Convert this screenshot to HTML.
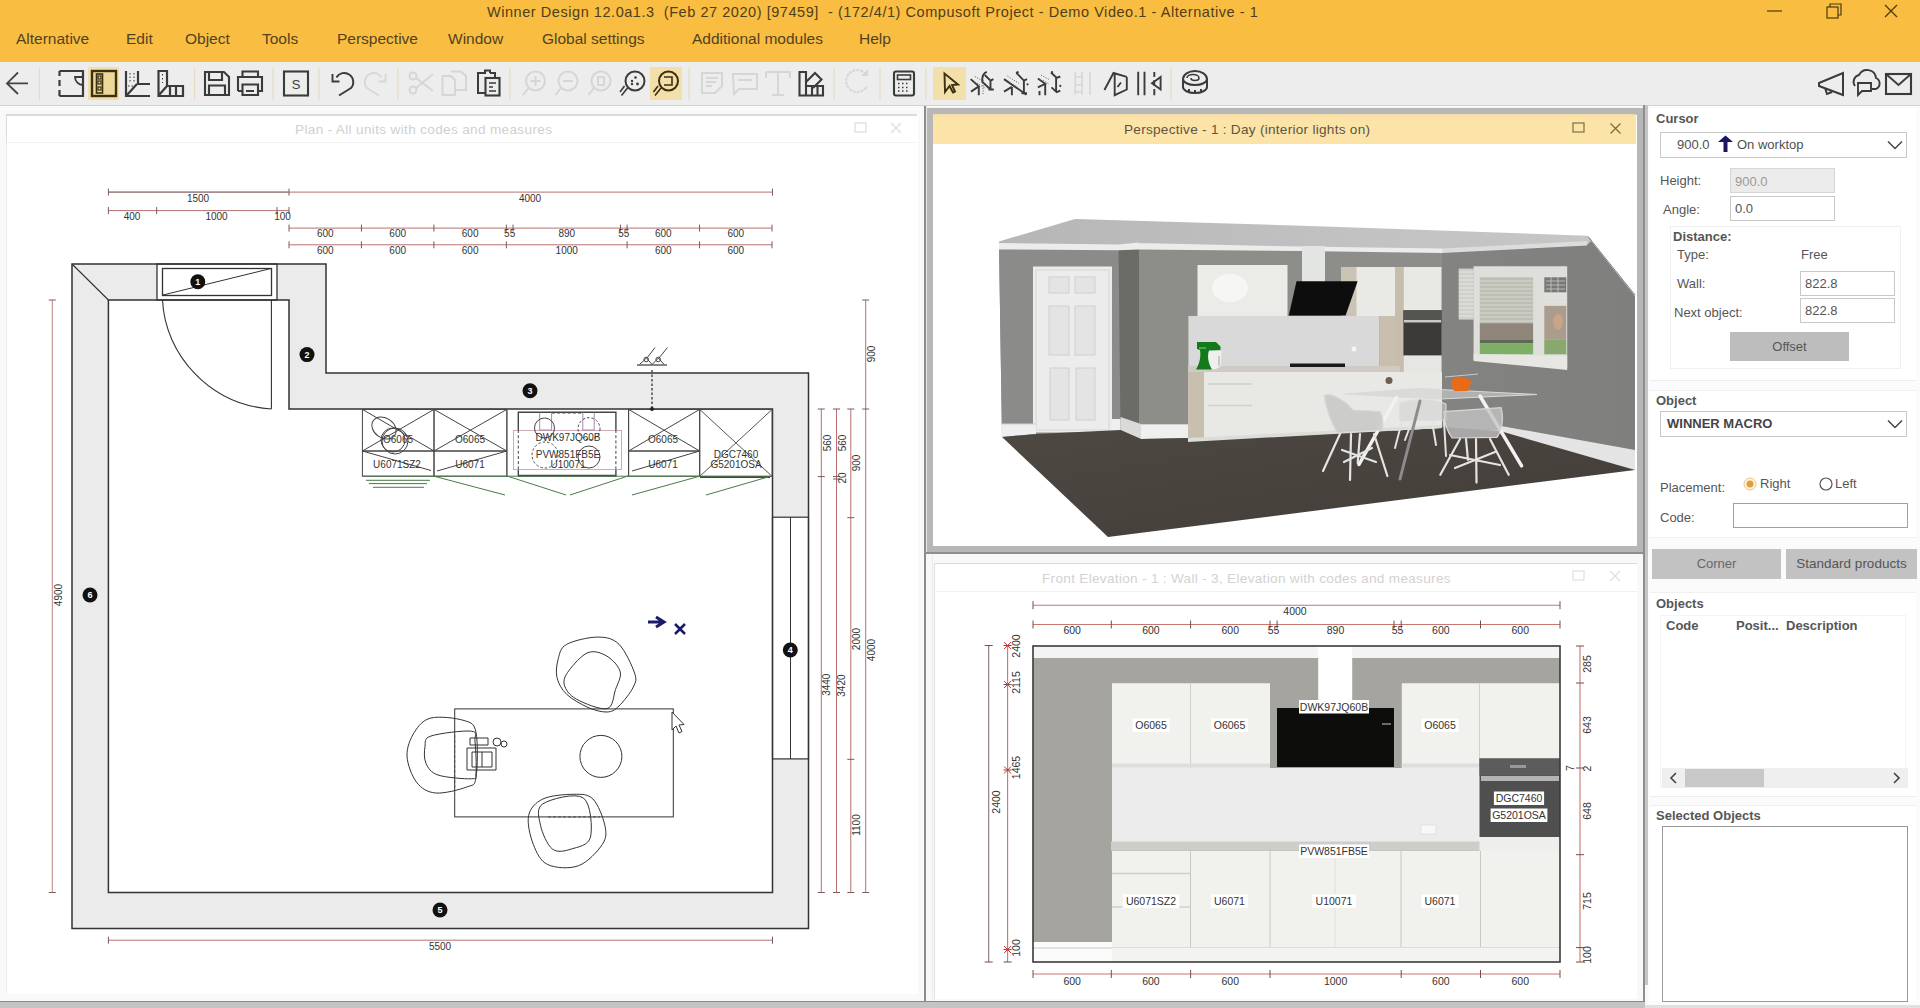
<!DOCTYPE html>
<html><head><meta charset="utf-8">
<style>
*{box-sizing:border-box;margin:0;padding:0}
html,body{width:1920px;height:1008px;overflow:hidden;background:#f0f0f0;font-family:"Liberation Sans",sans-serif;color:#333}
.a{position:absolute}
#top{left:0;top:0;width:1920px;height:62px;background:#f9bd42}
#title{left:487px;top:4px;font-size:14.5px;letter-spacing:0.55px;color:#4d3f1c;white-space:pre}
.menu{top:30px;font-size:15.5px;color:#524320}
#tb{left:0;top:62px;width:1920px;height:44px;background:#ededed;border-bottom:1px solid #d2d2d2}
.sep{top:8px;width:1px;height:30px;background:#e0d8c4}
.hl{background:#f3deaa}
#main{left:0;top:106px;width:1920px;height:902px;background:#f7f7f7}
.lbl{font-size:13px;color:#565656}
.bold{font-weight:bold}
.inp{background:#fff;border:1px solid #c8c8c8}
.btn{background:#c0c0c0;color:#555;font-size:13px;text-align:center}
</style></head><body>
<div id="top" class="a"></div>
<div id="title" class="a">Winner Design 12.0a1.3  (Feb 27 2020) [97459]  - (172/4/1) Compusoft Project - Demo Video.1 - Alternative - 1</div>
<div class="a menu" style="left:16px">Alternative</div>
<div class="a menu" style="left:126px">Edit</div>
<div class="a menu" style="left:185px">Object</div>
<div class="a menu" style="left:262px">Tools</div>
<div class="a menu" style="left:337px">Perspective</div>
<div class="a menu" style="left:448px">Window</div>
<div class="a menu" style="left:542px">Global settings</div>
<div class="a menu" style="left:692px">Additional modules</div>
<div class="a menu" style="left:859px">Help</div>
<!-- window controls -->
<svg class="a" style="left:1750px;top:0" width="170" height="26">
<line x1="17" y1="11" x2="32" y2="11" stroke="#4a3a10" stroke-width="1.2"/>
<rect x="77" y="7" width="11" height="11" fill="none" stroke="#4a3a10" stroke-width="1.2"/>
<path d="M80 7 V4 H91 V15 H88" fill="none" stroke="#4a3a10" stroke-width="1.2"/>
<path d="M135 5 L147 17 M147 5 L135 17" stroke="#4a3a10" stroke-width="1.3"/>
</svg>
<div id="tb" class="a"></div>
<div id="main" class="a"></div>
<!-- PLAN PANEL -->
<div class="a" style="left:0;top:106px;width:924px;height:895px;background:#f8f9f9"></div>
<div class="a" style="left:6px;top:114px;width:912px;height:880px;background:#fff;border-left:1px solid #eeeeee"></div>
<div class="a" style="left:6px;top:114px;width:911px;height:29px;border-top:2px solid #dcdcdc;border-left:1.5px solid #dcdcdc;border-bottom:1px solid #f3f3f3;background:#fff"></div>
<div class="a" style="left:295px;top:121.5px;font-size:13.6px;letter-spacing:0.33px;color:#d0d0d0">Plan - All units with codes and measures</div>
<svg class="a" style="left:850px;top:118px" width="60" height="22"><rect x="5" y="5" width="11" height="9" fill="none" stroke="#dcdcdc" stroke-width="1.2"/><path d="M41 5 L51 15 M51 5 L41 15" stroke="#dcdcdc" stroke-width="1.3"/></svg>
<div class="a" style="left:924px;top:106px;width:2px;height:896px;background:#8c8c8c"></div>
<div class="a" style="left:0;top:1000.5px;width:1645px;height:1.5px;background:#8a8a8a"></div>
<div class="a" style="left:0;top:1002px;width:1645px;height:6px;background:#c4c4c6"></div>
<!--PLANSVG--><svg class="a" style="left:0;top:143px" width="918" height="857" viewBox="0 143 918 857" font-family="Liberation Sans" font-size="10" fill="#333">
<path d="M72 264 H326 V373 H808.5 V928.5 H72 Z M108.4 300 V892.5 H772.5 V409 H289 V300 Z" fill="#ebebeb" fill-rule="evenodd" stroke="none"/>
<rect x="157" y="264" width="120" height="36" fill="#fff" stroke="#333" stroke-width="1.3"/>
<rect x="162.5" y="268.5" width="109" height="27" fill="#fff" stroke="#333" stroke-width="1.3"/>
<line x1="163" y1="295" x2="271" y2="268.5" stroke="#333" stroke-width="1"/>
<rect x="772.5" y="517.2" width="36" height="241.7" fill="#fff" stroke="#333" stroke-width="1.2"/>
<line x1="790.5" y1="517.2" x2="790.5" y2="759" stroke="#333" stroke-width="1"/>
<path d="M72 264 H326 V373 H808.5 V928.5 H72 Z M108.4 300 V892.5 H772.5 V409 H289 V300 Z" fill="none" stroke="#333" stroke-width="1.5"/>
<line x1="72" y1="264" x2="108.4" y2="300" stroke="#333" stroke-width="1.1"/>
<path d="M271.4 300 V409 M162.5 300 C165 355 210 405 271.4 409" fill="none" stroke="#333" stroke-width="1.1"/>
<circle cx="197.8" cy="281.7" r="7.5" fill="#111"/><text x="197.8" y="285.0" font-size="9" fill="#fff" text-anchor="middle" font-weight="bold">1</text>
<circle cx="307" cy="354.6" r="7.5" fill="#111"/><text x="307" y="357.90000000000003" font-size="9" fill="#fff" text-anchor="middle" font-weight="bold">2</text>
<circle cx="530" cy="390.7" r="7.5" fill="#111"/><text x="530" y="394.0" font-size="9" fill="#fff" text-anchor="middle" font-weight="bold">3</text>
<circle cx="790.3" cy="650" r="7.5" fill="#111"/><text x="790.3" y="653.3" font-size="9" fill="#fff" text-anchor="middle" font-weight="bold">4</text>
<circle cx="440" cy="910" r="7.5" fill="#111"/><text x="440" y="913.3" font-size="9" fill="#fff" text-anchor="middle" font-weight="bold">5</text>
<circle cx="90" cy="595" r="7.5" fill="#111"/><text x="90" y="598.3" font-size="9" fill="#fff" text-anchor="middle" font-weight="bold">6</text>
<line x1="108.4" y1="192.1" x2="772.5" y2="192.1" stroke="#b87070" stroke-width="1"/>
<line x1="108.4" y1="188.6" x2="108.4" y2="195.6" stroke="#7a5a5a" stroke-width="1"/>
<line x1="289" y1="188.6" x2="289" y2="195.6" stroke="#7a5a5a" stroke-width="1"/>
<line x1="772.5" y1="188.6" x2="772.5" y2="195.6" stroke="#7a5a5a" stroke-width="1"/>
<line x1="108.4" y1="192.1" x2="289" y2="192.1" stroke="#8a7a7a" stroke-width="1"/>
<text x="198" y="202.3" text-anchor="middle" font-size="10">1500</text>
<text x="530" y="202" text-anchor="middle" font-size="10">4000</text>
<line x1="108.4" y1="210.6" x2="289" y2="210.6" stroke="#b87070" stroke-width="1"/>
<line x1="108.4" y1="207.1" x2="108.4" y2="214.1" stroke="#7a5a5a" stroke-width="1"/>
<line x1="156.7" y1="207.1" x2="156.7" y2="214.1" stroke="#7a5a5a" stroke-width="1"/>
<line x1="277" y1="207.1" x2="277" y2="214.1" stroke="#7a5a5a" stroke-width="1"/>
<line x1="289" y1="207.1" x2="289" y2="214.1" stroke="#7a5a5a" stroke-width="1"/>
<text x="132" y="220.2" text-anchor="middle" font-size="10">400</text>
<text x="216.5" y="220.2" text-anchor="middle" font-size="10">1000</text>
<text x="282.5" y="220.2" text-anchor="middle" font-size="10">100</text>
<line x1="289" y1="228.1" x2="772" y2="228.1" stroke="#b87070" stroke-width="1"/>
<line x1="289" y1="224.6" x2="289" y2="231.6" stroke="#7a5a5a" stroke-width="1"/>
<line x1="361.45" y1="224.6" x2="361.45" y2="231.6" stroke="#7a5a5a" stroke-width="1"/>
<line x1="433.9" y1="224.6" x2="433.9" y2="231.6" stroke="#7a5a5a" stroke-width="1"/>
<line x1="506.35" y1="224.6" x2="506.35" y2="231.6" stroke="#7a5a5a" stroke-width="1"/>
<line x1="513" y1="224.6" x2="513" y2="231.6" stroke="#7a5a5a" stroke-width="1"/>
<line x1="620.45" y1="224.6" x2="620.45" y2="231.6" stroke="#7a5a5a" stroke-width="1"/>
<line x1="627.1" y1="224.6" x2="627.1" y2="231.6" stroke="#7a5a5a" stroke-width="1"/>
<line x1="699.55" y1="224.6" x2="699.55" y2="231.6" stroke="#7a5a5a" stroke-width="1"/>
<line x1="772" y1="224.6" x2="772" y2="231.6" stroke="#7a5a5a" stroke-width="1"/>
<text x="325.225" y="236.9" text-anchor="middle" font-size="10">600</text>
<text x="397.67499999999995" y="236.9" text-anchor="middle" font-size="10">600</text>
<text x="470.125" y="236.9" text-anchor="middle" font-size="10">600</text>
<text x="509.675" y="236.9" text-anchor="middle" font-size="10">55</text>
<text x="566.725" y="236.9" text-anchor="middle" font-size="10">890</text>
<text x="623.7750000000001" y="236.9" text-anchor="middle" font-size="10">55</text>
<text x="663.325" y="236.9" text-anchor="middle" font-size="10">600</text>
<text x="735.775" y="236.9" text-anchor="middle" font-size="10">600</text>
<line x1="289" y1="244.8" x2="772" y2="244.8" stroke="#b87070" stroke-width="1"/>
<line x1="289" y1="241.3" x2="289" y2="248.3" stroke="#7a5a5a" stroke-width="1"/>
<line x1="361.45" y1="241.3" x2="361.45" y2="248.3" stroke="#7a5a5a" stroke-width="1"/>
<line x1="433.9" y1="241.3" x2="433.9" y2="248.3" stroke="#7a5a5a" stroke-width="1"/>
<line x1="506.35" y1="241.3" x2="506.35" y2="248.3" stroke="#7a5a5a" stroke-width="1"/>
<line x1="627.1" y1="241.3" x2="627.1" y2="248.3" stroke="#7a5a5a" stroke-width="1"/>
<line x1="699.55" y1="241.3" x2="699.55" y2="248.3" stroke="#7a5a5a" stroke-width="1"/>
<line x1="772" y1="241.3" x2="772" y2="248.3" stroke="#7a5a5a" stroke-width="1"/>
<text x="325.225" y="253.8" text-anchor="middle" font-size="10">600</text>
<text x="397.67499999999995" y="253.8" text-anchor="middle" font-size="10">600</text>
<text x="470.125" y="253.8" text-anchor="middle" font-size="10">600</text>
<text x="566.725" y="253.8" text-anchor="middle" font-size="10">1000</text>
<text x="663.325" y="253.8" text-anchor="middle" font-size="10">600</text>
<text x="735.775" y="253.8" text-anchor="middle" font-size="10">600</text>
<line x1="52.3" y1="300" x2="52.3" y2="892.5" stroke="#c08484" stroke-width="1"/>
<line x1="48.8" y1="300" x2="55.8" y2="300" stroke="#7a5a5a" stroke-width="1"/>
<line x1="48.8" y1="892.5" x2="55.8" y2="892.5" stroke="#7a5a5a" stroke-width="1"/>
<text x="61.5" y="595" transform="rotate(-90 61.5 595)" text-anchor="middle" font-size="10">4900</text>
<line x1="108.4" y1="940.2" x2="772.5" y2="940.2" stroke="#b87070" stroke-width="1"/>
<line x1="108.4" y1="936.7" x2="108.4" y2="943.7" stroke="#7a5a5a" stroke-width="1"/>
<line x1="772.5" y1="936.7" x2="772.5" y2="943.7" stroke="#7a5a5a" stroke-width="1"/>
<text x="440" y="949.5" text-anchor="middle" font-size="10">5500</text>
<line x1="821.3" y1="409" x2="821.3" y2="892.5" stroke="#b87070" stroke-width="1"/>
<line x1="817.8" y1="409" x2="824.8" y2="409" stroke="#7a5a5a" stroke-width="1"/>
<line x1="817.8" y1="476.6" x2="824.8" y2="476.6" stroke="#7a5a5a" stroke-width="1"/>
<line x1="817.8" y1="892.5" x2="824.8" y2="892.5" stroke="#7a5a5a" stroke-width="1"/>
<line x1="836.5" y1="409" x2="836.5" y2="892.5" stroke="#b87070" stroke-width="1"/>
<line x1="833.0" y1="409" x2="840.0" y2="409" stroke="#7a5a5a" stroke-width="1"/>
<line x1="833.0" y1="476.6" x2="840.0" y2="476.6" stroke="#7a5a5a" stroke-width="1"/>
<line x1="833.0" y1="479" x2="840.0" y2="479" stroke="#7a5a5a" stroke-width="1"/>
<line x1="833.0" y1="892.5" x2="840.0" y2="892.5" stroke="#7a5a5a" stroke-width="1"/>
<line x1="850.8" y1="409" x2="850.8" y2="892.5" stroke="#b87070" stroke-width="1"/>
<line x1="847.3" y1="409" x2="854.3" y2="409" stroke="#7a5a5a" stroke-width="1"/>
<line x1="847.3" y1="517.7" x2="854.3" y2="517.7" stroke="#7a5a5a" stroke-width="1"/>
<line x1="847.3" y1="759.3" x2="854.3" y2="759.3" stroke="#7a5a5a" stroke-width="1"/>
<line x1="847.3" y1="892.5" x2="854.3" y2="892.5" stroke="#7a5a5a" stroke-width="1"/>
<line x1="865.7" y1="300" x2="865.7" y2="892.5" stroke="#b87070" stroke-width="1"/>
<line x1="862.2" y1="300" x2="869.2" y2="300" stroke="#7a5a5a" stroke-width="1"/>
<line x1="862.2" y1="409" x2="869.2" y2="409" stroke="#7a5a5a" stroke-width="1"/>
<line x1="862.2" y1="892.5" x2="869.2" y2="892.5" stroke="#7a5a5a" stroke-width="1"/>
<text x="830.5" y="443" transform="rotate(-90 830.5 443)" text-anchor="middle" font-size="10">560</text>
<text x="845.5" y="443" transform="rotate(-90 845.5 443)" text-anchor="middle" font-size="10">560</text>
<text x="845.5" y="478" transform="rotate(-90 845.5 478)" text-anchor="middle" font-size="10">20</text>
<text x="860" y="463" transform="rotate(-90 860 463)" text-anchor="middle" font-size="10">900</text>
<text x="875" y="354" transform="rotate(-90 875 354)" text-anchor="middle" font-size="10">900</text>
<text x="830.5" y="684.7" transform="rotate(-90 830.5 684.7)" text-anchor="middle" font-size="10">3440</text>
<text x="845.5" y="685.6" transform="rotate(-90 845.5 685.6)" text-anchor="middle" font-size="10">3420</text>
<text x="860" y="639" transform="rotate(-90 860 639)" text-anchor="middle" font-size="10">2000</text>
<text x="875" y="650" transform="rotate(-90 875 650)" text-anchor="middle" font-size="10">4000</text>
<text x="860" y="825" transform="rotate(-90 860 825)" text-anchor="middle" font-size="10">1100</text>
<g fill="none" stroke="#444" stroke-width="1">
<rect x="362.4" y="409.4" width="71.60000000000002" height="66.8"/>
<line x1="362.4" y1="451" x2="434" y2="451" stroke-width="1.3"/>
<path d="M362.4 409.4 L434 451 M434 409.4 L362.4 451"/>
<rect x="434" y="409.4" width="72.80000000000001" height="66.8"/>
<line x1="434" y1="451" x2="506.8" y2="451" stroke-width="1.3"/>
<path d="M434 409.4 L506.8 451 M506.8 409.4 L434 451"/>
<rect x="628.6" y="409.4" width="71.10000000000002" height="66.8"/>
<line x1="628.6" y1="451" x2="699.7" y2="451" stroke-width="1.3"/>
<path d="M628.6 409.4 L699.7 451 M699.7 409.4 L628.6 451"/>
<path d="M362.4 451 L431 470.5 M506.8 451 L437 471 M699.7 451 L632 471"/>
<rect x="699.7" y="409.4" width="72.5" height="67" /><path d="M699.7 409.4 L772.2 476.4 M772.2 409.4 L699.7 476.4" stroke="#555"/>
<line x1="507" y1="409.4" x2="507" y2="476" stroke-width="0.8"/><line x1="628.6" y1="409.4" x2="628.6" y2="476" stroke-width="0.8"/>
<path d="M518.3 430 V412.2 H615.9 V430 M518.3 470 V475.7 H615.9 V470" stroke-width="1.4"/><path d="M518.3 475.7 H615.9" stroke-width="1.8"/>
<rect x="513.5" y="430.5" width="108" height="39" stroke="#c9a0b0" stroke-width="0.9"/>
<path d="M518.3 430 V470 M615.9 430 V470 M552 413 H583" stroke-dasharray="3 2.2" stroke-width="1"/><path d="M539.7 412.5 V430 H551.6 V412.5 M582.8 412.5 V430 H594.2 V412.5" stroke="#9a80a8" stroke-width="0.9"/>
<circle cx="544.5" cy="428" r="10"/><circle cx="589" cy="428.7" r="11" stroke-dasharray="2.5 2"/><circle cx="545" cy="455" r="13" stroke-dasharray="2.5 2"/><circle cx="589" cy="457" r="11"/>
<ellipse cx="384" cy="428" rx="13" ry="10" transform="rotate(35 384 428)"/><circle cx="393" cy="440" r="12"/><circle cx="395" cy="441" r="13"/>
<path d="M700 477 H770" stroke-width="1.8"/>
</g>
<g stroke="#4a7a4a" stroke-width="1" fill="none">
<path d="M366 480.3 H430 M369 483.6 H427 M373 487.3 H424"/>
<path d="M362.4 476.2 H772 M434 476.2 L505 495 M507 476 L566 495 M628 476 L570 495 M699.7 476.2 L632 495 M768 477 L706 495"/>
</g>
<path d="M637 365 H667" stroke="#555" stroke-width="1.4"/><path d="M639.5 364.5 L646.5 358 L652 364.5 M652 364.5 L658.5 358 L664 364.5 M647 358 L655 347.5 M659 358 L667.5 347.5" fill="none" stroke="#444" stroke-width="1"/><circle cx="646.2" cy="359.5" r="2.3" fill="none" stroke="#444" stroke-width="1"/><circle cx="658.2" cy="359.5" r="2.3" fill="none" stroke="#444" stroke-width="1"/>
<line x1="652" y1="370" x2="652" y2="409" stroke="#333" stroke-width="1.3" stroke-dasharray="2.5 2"/><circle cx="652" cy="409" r="2" fill="#222"/>
<text x="398" y="443" text-anchor="middle" font-size="10" fill="#333">O6065</text>
<text x="397" y="468" text-anchor="middle" font-size="10" fill="#333">U6071SZ2</text>
<text x="470" y="443" text-anchor="middle" font-size="10" fill="#333">O6065</text>
<text x="470" y="468" text-anchor="middle" font-size="10" fill="#333">U6071</text>
<text x="568" y="440.5" text-anchor="middle" font-size="10" fill="#333">DWK97JQ60B</text>
<text x="568" y="457.5" text-anchor="middle" font-size="10" fill="#333">PVW851FB5E</text>
<text x="568" y="467.5" text-anchor="middle" font-size="10" fill="#333">U10071</text>
<text x="663" y="443" text-anchor="middle" font-size="10" fill="#333">O6065</text>
<text x="663" y="468" text-anchor="middle" font-size="10" fill="#333">U6071</text>
<text x="736" y="458" text-anchor="middle" font-size="10" fill="#333">DGC7460</text>
<text x="736" y="468" text-anchor="middle" font-size="10" fill="#333">G5201OSA</text>
<g fill="none" stroke="#333" stroke-width="1">
<rect x="454.7" y="708.9" width="218.6" height="108"/>
<circle cx="600.9" cy="756.4" r="21"/>
<path d="M566.7 644.3 C573.2 640.7 588.9 637.1 597.6 637.1 C606.3 637.1 612.9 638.3 619.0 644.3 C625.1 650.3 632.1 665.8 634.5 672.9 C636.9 680.0 635.9 681.5 633.3 687.0 C630.7 692.5 623.4 701.8 619.0 706.0 C614.6 710.2 612.2 711.8 607.0 712.0 C601.8 712.2 594.7 710.4 588.0 707.4 C581.3 704.4 571.9 699.3 566.7 694.3 C561.5 689.3 558.4 683.5 557.0 677.6 C555.6 671.7 556.7 664.2 558.3 658.6 C559.9 653.0 560.2 647.9 566.7 644.3 Z"/>
<path d="M588.0 652.6 C594.3 650.2 601.6 653.0 607.0 656.2 C612.4 659.4 618.8 666.2 620.2 671.7 C621.6 677.2 617.7 683.4 615.5 689.5 C613.3 695.6 613.5 707.0 607.0 708.6 C600.5 710.2 583.3 703.0 576.2 699.0 C569.1 695.0 565.5 689.5 564.3 684.8 C563.1 680.0 565.0 675.9 569.0 670.5 C573.0 665.1 581.7 655.0 588.0 652.6 Z"/>
<path d="M431.0 718.0 C439.3 716.0 456.5 718.1 464.0 720.5 C471.5 722.9 474.0 722.9 476.0 732.4 C478.0 741.9 477.6 768.5 476.0 777.6 C474.4 786.7 473.4 784.4 466.7 787.0 C460.0 789.6 444.0 793.8 435.7 793.0 C427.4 792.2 421.5 788.6 416.7 782.4 C411.9 776.2 407.4 764.3 407.0 756.0 C406.6 747.7 410.3 738.7 414.3 732.4 C418.3 726.1 422.7 720.0 431.0 718.0 Z"/>
<path d="M431.0 736.0 C438.7 733.4 464.1 730.2 471.4 731.2 C478.7 732.2 474.2 735.0 475.0 742.0 C475.8 749.0 476.6 766.8 476.0 772.9 C475.4 779.0 477.7 778.4 471.4 778.8 C465.1 779.1 445.6 777.6 438.0 775.0 C430.4 772.4 428.2 768.0 426.0 763.3 C423.8 758.6 424.2 751.2 425.0 746.7 C425.8 742.2 423.3 738.6 431.0 736.0 Z"/>
<path d="M542.9 799.0 C550.4 795.4 565.5 794.3 573.8 794.3 C582.1 794.3 587.7 793.9 592.9 799.0 C598.1 804.1 603.2 817.7 604.8 825.2 C606.4 832.8 606.8 837.5 602.4 844.3 C598.0 851.0 587.7 862.3 578.6 865.7 C569.5 869.1 555.2 868.1 547.6 864.5 C540.0 860.9 536.5 852.4 533.3 844.3 C530.1 836.2 527.0 823.2 528.6 815.7 C530.2 808.2 535.4 802.6 542.9 799.0 Z"/>
<path d="M542.9 803.8 C550.0 799.2 575.4 792.3 583.3 797.9 C591.2 803.5 592.5 828.6 590.5 837.1 C588.5 845.6 577.8 847.0 571.4 849.0 C565.0 851.0 557.5 853.0 552.4 849.0 C547.2 845.0 542.1 832.7 540.5 825.2 C538.9 817.7 535.8 808.3 542.9 803.8 Z"/>
<path d="M467 748 H496 V770 H467 Z M472 752 H492 V767 H472 Z M482 752 V767 M470 738 H488 V745 H470 Z"/><circle cx="497" cy="742" r="4"/><circle cx="504" cy="744" r="3"/>
</g>
<path d="M454.7 735 V790 M548 817 H600" stroke="#444" stroke-dasharray="3 2" stroke-width="0.9" fill="none"/>
<path d="M648 622 H662 M656 617 L664 622 L656 627" stroke="#1a1a6a" stroke-width="3" fill="none"/><path d="M675 624 L685 634 M685 624 L675 634" stroke="#1a1a6a" stroke-width="2.5"/>
<path d="M672 712 L672 730 L676 726 L679 733 L682 731.5 L679 725 L684 724.5 Z" fill="#fff" stroke="#333" stroke-width="1"/>
</svg><!--/PLANSVG-->
<!-- RIGHT-CENTER AREA -->
<div class="a" style="left:926px;top:106px;width:719px;height:895px;background:#f8f8f8"></div>
<!-- perspective window frame -->
<div class="a" style="left:927px;top:108px;width:716px;height:445px;background:#b7b7b7"></div><div class="a" style="left:926px;top:106px;width:1px;height:447px;background:#e6e6e6"></div>
<div class="a" style="left:926px;top:552px;width:719px;height:2px;background:#8e8e8e"></div>
<div class="a" style="left:933px;top:115px;width:704px;height:431px;background:#fff"></div>
<div class="a" style="left:933px;top:114px;width:703px;height:29.5px;background:linear-gradient(#f0dca8 0,#fce4a9 3px,#fce4a9 100%)"></div>
<div class="a" style="left:1124px;top:121.5px;font-size:13.6px;letter-spacing:0.27px;color:#5e5440">Perspective - 1 : Day (interior lights on)</div>
<svg class="a" style="left:1565px;top:118px" width="65" height="22"><rect x="8" y="5" width="11" height="9" fill="none" stroke="#7d6d45" stroke-width="1.2"/><path d="M45.5 5.5 L55.5 15.5 M55.5 5.5 L45.5 15.5" stroke="#7d6d45" stroke-width="1.3"/></svg>
<!--PERSPSVG--><svg class="a" style="left:934px;top:143px" width="703" height="403" viewBox="934 143 703 403">
<defs>
<linearGradient id="ceil" x1="0" y1="0" x2="1" y2="0"><stop offset="0" stop-color="#b6b6b6"/><stop offset="0.6" stop-color="#c2c2c2"/><stop offset="1" stop-color="#c6c6c6"/></linearGradient>
<linearGradient id="rwall" x1="0" y1="0" x2="1" y2="0"><stop offset="0" stop-color="#8d8d8a"/><stop offset="1" stop-color="#7f7f7d"/></linearGradient>
<linearGradient id="floorg" x1="0" y1="0" x2="1" y2="1"><stop offset="0" stop-color="#4e4843"/><stop offset="1" stop-color="#433d39"/></linearGradient>
</defs>
<!-- walls -->
<path d="M999 246 L1118 247 L1139 246 L1442 251 L1587 236 L1635 296 V470 L1500 430 L1190 442 L1002 437 Z" fill="url(#rwall)"/>
<path d="M999 246 L1002 437 L1119 432 V247 Z" fill="#8b8b89"/>
<path d="M1118.5 247 L1139 246 V436 L1120.5 430 Z" fill="#6b6b68"/>
<path d="M1139 246 L1442 251 V428 L1139 436 Z" fill="#8d8d8a"/>
<!-- ceiling -->
<path d="M999 241.5 L1075 218.9 L1340 226.9 L1587 235.8 L1592 240 L1587 245 L1442 252 L1139 244 L1118 245 L999 244 Z" fill="url(#ceil)"/>
<path d="M999 243 L1118 244.4 V250.2 L999 249.5 Z M1118 244.4 L1139 242.5 V249.5 L1118 250.2 Z M1139 243 L1300 246.6 L1442 248.5 V253 L1300 251 L1139 249.5 Z" fill="#ececec"/>
<path d="M1442 248.5 L1587 241 V245.5 L1442 253 Z" fill="#dcdcdc"/>
<path d="M1588 236.5 L1635 295" stroke="#7a7a7a" stroke-width="1" fill="none"/>
<!-- chimney -->
<rect x="1302" y="246" width="23" height="36" fill="#e3e5e3"/>
<!-- door -->
<rect x="1033" y="266.5" width="79" height="166" fill="#ececec"/>
<rect x="1036" y="270" width="73" height="160" fill="none" stroke="#d6d6d6" stroke-width="1"/>
<g fill="#e4e4e4" stroke="#cfcfcf" stroke-width="1">
<rect x="1049" y="277" width="20" height="16"/><rect x="1075" y="277" width="20" height="16"/>
<rect x="1049" y="306" width="20" height="49"/><rect x="1075" y="306" width="20" height="49"/>
<rect x="1050" y="368" width="19" height="52"/><rect x="1076" y="368" width="19" height="52"/>
</g>
<!-- skirting -->
<path d="M1001 424 L1036 424 V434 L1002 437 Z M1112 419 H1120.5 V430 L1112 433 Z M1141 424 H1189 V438 L1141 439 Z" fill="#efefef"/><path d="M1120.5 417 L1141 424 V439 L1120.5 430 Z" fill="#dadada"/><path d="M1001 424 H1036 M1141 424.5 H1189" stroke="#d0d0d0" stroke-width="1"/>
<path d="M1501 426 L1635 450 V470 L1500 432 Z" fill="#e4e4e4"/>
<!-- floor -->
<path d="M1002 437 L1036 434 L1120.5 430 L1141 439 L1189 438 L1190 441 L1442 427 L1500 431 L1635 470 L1108 537 Z" fill="url(#floorg)"/>
<!-- wall cabinets -->
<rect x="1197.5" y="265" width="90" height="51" fill="#ebebe8"/>
<ellipse cx="1230" cy="288" rx="18" ry="14" fill="#f6f6f4"/>
<rect x="1341" y="267" width="16" height="49" fill="#cbc3b3"/>
<rect x="1356.5" y="267" width="38.5" height="49" fill="#e9e9e6"/>
<path d="M1395 267 H1403.5 V430 L1395 431 Z" fill="#c6bdac"/>
<rect x="1403.5" y="267" width="38" height="43" fill="#e8e8e5"/>
<!-- oven -->
<rect x="1403.5" y="310.5" width="38" height="45" fill="#3b3a39"/>
<rect x="1403.5" y="310.5" width="38" height="9.5" fill="#555451"/>
<rect x="1404" y="320" width="37" height="2.5" fill="#c8c8c8"/>
<path d="M1403.5 355.5 H1441.5 V428 L1403.5 430 Z" fill="#e6e6e3"/>
<!-- hood -->
<path d="M1296.5 281.3 L1357.6 281.3 L1345.6 315.5 L1288.8 315.5 Z" fill="#0d0d0d"/>
<!-- backsplash -->
<rect x="1188.4" y="316" width="191" height="50.5" fill="#d9d9d9"/>
<rect x="1379.4" y="316" width="16" height="54" fill="#cabfae"/>
<circle cx="1354" cy="349" r="2.5" fill="#f4f4f4"/>
<!-- worktop -->
<path d="M1188 366 H1400 V372.5 H1188 Z" fill="#cfcbc4"/>
<rect x="1290" y="363.5" width="55" height="3.5" fill="#1a1a1a"/>
<!-- base cabinets -->
<path d="M1188 372 H1204 V440 L1188 441 Z" fill="#c9bfae"/>
<path d="M1204 372 H1442 V428 L1204 440 Z" fill="#e8e8e5"/>
<path d="M1208 384 H1252 M1208 405.5 H1252" stroke="#cfcfcc" stroke-width="1.3"/>
<path d="M1188 438 L1442 425 V428 L1188 442 Z" fill="#dcdcd9"/>
<!-- mixer -->
<path d="M1208 351 H1221.5 L1221 366 Q1215 371 1209 369 Z" fill="#eef0ee"/><path d="M1219 356 V366" stroke="#b0b0b0" stroke-width="1.2"/><path d="M1197 342 H1216 L1220.5 346.5 V350 L1209 350.5 C1207 356 1208 363 1212 369.5 H1196 C1200 363 1201 356 1200 350 L1197 349 Z" fill="#137a1c"/><path d="M1199 348 H1206" stroke="#7fcf85" stroke-width="1"/>
<!-- window -->
<rect x="1458.7" y="268.6" width="15" height="51" fill="#cfcfcb"/>
<g stroke="#e6e6e2" stroke-width="1.2"><path d="M1458.7 272 H1474 M1458.7 276 H1474 M1458.7 280 H1474 M1458.7 284 H1474 M1458.7 288 H1474 M1458.7 292 H1474 M1458.7 296 H1474 M1458.7 300 H1474 M1458.7 304 H1474 M1458.7 308 H1474 M1458.7 312 H1474 M1458.7 316 H1474"/></g>
<path d="M1473.6 266.2 H1567.2 V368 L1473.6 360 Z" fill="#dededb"/>
<rect x="1479.8" y="277.3" width="53.3" height="46" fill="#bdbeb4"/>
<rect x="1479.8" y="323.2" width="53.3" height="17" fill="#8f857a"/>
<rect x="1479.8" y="340" width="53.3" height="3.5" fill="#5f6a55"/>
<rect x="1479.8" y="343.5" width="53.3" height="10.8" fill="#7fae66"/>
<g stroke="#d6d6cf" stroke-width="1.1"><path d="M1479.8 281 H1533 M1479.8 285 H1533 M1479.8 289 H1533 M1479.8 293 H1533 M1479.8 297 H1533 M1479.8 301 H1533 M1479.8 305 H1533 M1479.8 309 H1533 M1479.8 313 H1533 M1479.8 317 H1533 M1479.8 321 H1533"/></g>
<rect x="1544.3" y="277.3" width="22" height="15" fill="#787876"/>
<path d="M1546 281 H1565 M1546 285 H1565 M1546 289 H1565 M1551 277 V292 M1558 277 V292" stroke="#c8c8c6" stroke-width="0.8"/>
<rect x="1544.3" y="305.9" width="22" height="34" fill="#aa9d8e"/>
<ellipse cx="1558" cy="322" rx="5" ry="8" fill="#c9a488"/>
<rect x="1544.3" y="340" width="22" height="14.3" fill="#88a870"/>
<g stroke="#e4e4e0" stroke-width="1.1"><path d="M1543 294 H1566 M1543 298 H1566 M1543 302 H1566"/></g>
<path d="M1473.6 354 L1567.2 356 V370 L1473.6 361 Z" fill="#e6e6e3"/>
<!-- table + chairs -->
<g fill="none" stroke-linecap="round">
<path d="M1345 394 L1420 388.5 L1537 394.5 L1440 399 Z" fill="#d0d0d0" fill-opacity="0.6" stroke="#dadada" stroke-width="1"/>
<!-- back chair -->
<path d="M1400 403 C1415 398 1435 399 1446 404 L1446 420 L1400 421 Z" fill="#cfcfcf" fill-opacity="0.55" stroke="#dedede" stroke-width="1"/>
<path d="M1402 421 L1395 448 M1444 421 L1446 456 M1412 421 L1405 440 M1432 421 L1436 445" stroke="#e2e2e2" stroke-width="2"/>
<path d="M1420 401 L1400 479" stroke="#8c8c8c" stroke-width="3"/>
<path d="M1396.5 397.5 L1359 464.5" stroke="#f2f2f2" stroke-width="3.5"/>
<path d="M1480 396 L1521.6 465.8" stroke="#f2f2f2" stroke-width="3.5"/>
<!-- left chair -->
<path d="M1324 395.5 C1330 392 1345 400 1353 410 L1380 411.5 C1384 420 1383 427 1382 430 L1337 432.5 C1330 420 1326 408 1324 395.5 Z" fill="#c4c4c4" fill-opacity="0.78" stroke="#d8d8d8" stroke-width="1.2"/>
<path d="M1340 434 L1323 471 M1351 434 L1350 480 M1374 434 L1387.4 476 M1360 434 L1357.7 463 M1342 450 L1376 462 M1372 448 L1344 462" stroke="#e4e4e4" stroke-width="2.2"/>
<!-- right chair -->
<path d="M1444 411.6 L1501 407.7 C1504 418 1502 430 1497 437.4 L1452 438 C1446 430 1444 420 1444 411.6 Z" fill="#c4c4c4" fill-opacity="0.78" stroke="#d8d8d8" stroke-width="1.2"/>
<path d="M1460 439 L1440.3 474.8 M1476 439 L1476.5 482.6 M1490 439 L1508.7 474.8 M1466 439 L1468 460 M1450 455 L1500 465 M1495 452 L1455 468" stroke="#e4e4e4" stroke-width="2.2"/>
</g>
<path d="M1450.6 382 C1454 375 1467 375 1471.3 382 L1468 391 H1454 Z" fill="#e96a17"/>
<path d="M1445 377 L1478 374" stroke="#c8c8d8" stroke-width="1" fill="none"/>
<circle cx="1389" cy="380.6" r="3.5" fill="#6e5e50"/>
</svg>
<!--/PERSPSVG-->
<!-- elevation window -->
<div class="a" style="left:932px;top:554px;width:1px;height:447px;background:#ececec"></div>
<div class="a" style="left:934px;top:563px;width:703px;height:436px;background:#fff;border-left:1px solid #e2e2e2"></div>
<div class="a" style="left:934px;top:563px;width:703px;height:29px;border-top:1.5px solid #dcdcdc;border-bottom:1px solid #f0f0f0"></div>
<div class="a" style="left:1042px;top:570.5px;font-size:13.6px;letter-spacing:0.3px;color:#d2d2d2">Front Elevation - 1 : Wall - 3, Elevation with codes and measures</div>
<svg class="a" style="left:1565px;top:566px" width="65" height="22"><rect x="8" y="5" width="11" height="9" fill="none" stroke="#e0e0e0" stroke-width="1.2"/><path d="M45 5 L55 15 M55 5 L45 15" stroke="#e0e0e0" stroke-width="1.3"/></svg>
<!--ELEVSVG--><svg class="a" style="left:934px;top:592px" width="703" height="407" viewBox="934 592 703 407" font-family="Liberation Sans" font-size="10" fill="#333">
<rect x="1033" y="646" width="527" height="316" fill="#f4f4f2"/>
<rect x="1033" y="658" width="79" height="284" fill="#a5a49e"/>
<rect x="1112" y="658" width="448" height="25.5" fill="#a5a49e"/>
<rect x="1270" y="683" width="132" height="85" fill="#a5a49e"/>
<rect x="1318.2" y="646" width="34" height="62" fill="#ffffff"/>
<rect x="1033" y="942" width="79" height="20" fill="#fbfbfb"/><line x1="1033" y1="948" x2="1112" y2="948" stroke="#dadada" stroke-width="1.3"/>
<rect x="1112" y="683.5" width="158" height="84.5" fill="#f1f1ee"/><line x1="1190.5" y1="683.5" x2="1190.5" y2="768" stroke="#cfcfcc" stroke-width="1"/><rect x="1112" y="763.5" width="158" height="4" fill="#dedede"/>
<rect x="1401.8" y="683.5" width="78" height="84.5" fill="#f1f1ee"/><rect x="1401.8" y="763.5" width="78" height="4" fill="#dedede"/>
<rect x="1479.5" y="683.5" width="80.5" height="74.5" fill="#f1f1ee"/><line x1="1479.5" y1="683.5" x2="1479.5" y2="760" stroke="#cfcfcc" stroke-width="1"/>
<rect x="1277" y="708" width="117" height="59" fill="#0d0d0b"/><path d="M1382 724 H1391" stroke="#aaa" stroke-width="1.2"/>
<rect x="1112" y="768" width="367.5" height="74" fill="#ececec"/>
<rect x="1421" y="825" width="15" height="9" fill="#f8f8f8" stroke="#dcdcdc" stroke-width="0.8"/>
<rect x="1479.5" y="758.5" width="80.5" height="78.5" fill="#4f4f4f"/><rect x="1479.5" y="758.5" width="80.5" height="17" fill="#5c5c5c"/><rect x="1481" y="776" width="78" height="5" fill="#b4b4b4"/><rect x="1510" y="765" width="16" height="3" fill="#999"/>
<rect x="1479.5" y="837" width="80.5" height="20" fill="#eeeeec"/><line x1="1479.5" y1="857" x2="1560" y2="857" stroke="#d8d8d8" stroke-width="1.2"/>
<rect x="1111" y="841.5" width="368.5" height="9.5" fill="#cdcdc9"/><line x1="1111" y1="851" x2="1479.5" y2="851" stroke="#bcbcb8" stroke-width="1"/>
<rect x="1112" y="851" width="448" height="96.5" fill="#f1f1ee"/>
<line x1="1190.5" y1="851" x2="1190.5" y2="947.5" stroke="#c8c8c4" stroke-width="1"/>
<line x1="1270" y1="851" x2="1270" y2="947.5" stroke="#c8c8c4" stroke-width="1"/>
<line x1="1401" y1="851" x2="1401" y2="947.5" stroke="#c8c8c4" stroke-width="1"/>
<line x1="1480.5" y1="851" x2="1480.5" y2="947.5" stroke="#c8c8c4" stroke-width="1"/>
<line x1="1335" y1="853" x2="1335" y2="947" stroke="#e0e0dc" stroke-width="1"/>
<path d="M1112 873.5 H1190 M1112 907 H1190" stroke="#cfcfcc" stroke-width="1.4"/>
<rect x="1112" y="947.5" width="448" height="14" fill="#f3f3f1"/><line x1="1112" y1="947.5" x2="1560" y2="947.5" stroke="#dcdcd8" stroke-width="1"/>
<rect x="1033" y="646" width="527" height="316" fill="none" stroke="#3a3a3a" stroke-width="1.6"/>
<rect x="1132.5" y="718.5" width="37.0" height="13.5" fill="#fff"/>
<text x="1151" y="729.1" text-anchor="middle" font-size="10.5" fill="#333">O6065</text>
<rect x="1211.0" y="718.5" width="37.0" height="13.5" fill="#fff"/>
<text x="1229.5" y="729.1" text-anchor="middle" font-size="10.5" fill="#333">O6065</text>
<rect x="1421.5" y="718.5" width="37.0" height="13.5" fill="#fff"/>
<text x="1440" y="729.1" text-anchor="middle" font-size="10.5" fill="#333">O6065</text>
<rect x="1299.0" y="700" width="70.0" height="13.5" fill="#fff"/>
<text x="1334" y="710.6" text-anchor="middle" font-size="10.5" fill="#333">DWK97JQ60B</text>
<rect x="1493.9" y="791.5" width="50.199999999999996" height="13.5" fill="#fff"/>
<text x="1519" y="802.1" text-anchor="middle" font-size="10.5" fill="#333">DGC7460</text>
<rect x="1490.6" y="808.5" width="56.8" height="13.5" fill="#fff"/>
<text x="1519" y="819.1" text-anchor="middle" font-size="10.5" fill="#333">G5201OSA</text>
<rect x="1299.0" y="844.5" width="70.0" height="13.5" fill="#fff"/>
<text x="1334" y="855.1" text-anchor="middle" font-size="10.5" fill="#333">PVW851FB5E</text>
<rect x="1122.6" y="894.5" width="56.8" height="13.5" fill="#fff"/>
<text x="1151" y="905.1" text-anchor="middle" font-size="10.5" fill="#333">U6071SZ2</text>
<rect x="1211.0" y="894.5" width="37.0" height="13.5" fill="#fff"/>
<text x="1229.5" y="905.1" text-anchor="middle" font-size="10.5" fill="#333">U6071</text>
<rect x="1312.2" y="894.5" width="43.599999999999994" height="13.5" fill="#fff"/>
<text x="1334" y="905.1" text-anchor="middle" font-size="10.5" fill="#333">U10071</text>
<rect x="1421.5" y="894.5" width="37.0" height="13.5" fill="#fff"/>
<text x="1440" y="905.1" text-anchor="middle" font-size="10.5" fill="#333">U6071</text>
<line x1="1033" y1="605.2" x2="1560" y2="605.2" stroke="#c87670" stroke-width="1.1"/>
<line x1="1033" y1="601.2" x2="1033" y2="609.2" stroke="#7a4a4a" stroke-width="1"/>
<line x1="1560" y1="601.2" x2="1560" y2="609.2" stroke="#7a4a4a" stroke-width="1"/>
<text x="1295" y="614.7" text-anchor="middle" font-size="10.5">4000</text>
<line x1="1033" y1="624.5" x2="1560" y2="624.5" stroke="#c87670" stroke-width="1.1"/>
<line x1="1033" y1="620.5" x2="1033" y2="628.5" stroke="#7a4a4a" stroke-width="1"/>
<line x1="1111.3" y1="620.5" x2="1111.3" y2="628.5" stroke="#7a4a4a" stroke-width="1"/>
<line x1="1190.6" y1="620.5" x2="1190.6" y2="628.5" stroke="#7a4a4a" stroke-width="1"/>
<line x1="1270" y1="620.5" x2="1270" y2="628.5" stroke="#7a4a4a" stroke-width="1"/>
<line x1="1277.1" y1="620.5" x2="1277.1" y2="628.5" stroke="#7a4a4a" stroke-width="1"/>
<line x1="1394" y1="620.5" x2="1394" y2="628.5" stroke="#7a4a4a" stroke-width="1"/>
<line x1="1401.2" y1="620.5" x2="1401.2" y2="628.5" stroke="#7a4a4a" stroke-width="1"/>
<line x1="1480.5" y1="620.5" x2="1480.5" y2="628.5" stroke="#7a4a4a" stroke-width="1"/>
<line x1="1560" y1="620.5" x2="1560" y2="628.5" stroke="#7a4a4a" stroke-width="1"/>
<text x="1072.15" y="634.2" text-anchor="middle" font-size="10.5">600</text>
<text x="1150.9499999999998" y="634.2" text-anchor="middle" font-size="10.5">600</text>
<text x="1230.3" y="634.2" text-anchor="middle" font-size="10.5">600</text>
<text x="1273.55" y="634.2" text-anchor="middle" font-size="10.5">55</text>
<text x="1335.55" y="634.2" text-anchor="middle" font-size="10.5">890</text>
<text x="1397.6" y="634.2" text-anchor="middle" font-size="10.5">55</text>
<text x="1440.85" y="634.2" text-anchor="middle" font-size="10.5">600</text>
<text x="1520.25" y="634.2" text-anchor="middle" font-size="10.5">600</text>
<line x1="1033" y1="974" x2="1560" y2="974" stroke="#c87670" stroke-width="1.1"/>
<line x1="1033" y1="970" x2="1033" y2="978" stroke="#7a4a4a" stroke-width="1"/>
<line x1="1111.3" y1="970" x2="1111.3" y2="978" stroke="#7a4a4a" stroke-width="1"/>
<line x1="1190.6" y1="970" x2="1190.6" y2="978" stroke="#7a4a4a" stroke-width="1"/>
<line x1="1270" y1="970" x2="1270" y2="978" stroke="#7a4a4a" stroke-width="1"/>
<line x1="1401.2" y1="970" x2="1401.2" y2="978" stroke="#7a4a4a" stroke-width="1"/>
<line x1="1480.5" y1="970" x2="1480.5" y2="978" stroke="#7a4a4a" stroke-width="1"/>
<line x1="1560" y1="970" x2="1560" y2="978" stroke="#7a4a4a" stroke-width="1"/>
<text x="1072.15" y="984.5" text-anchor="middle" font-size="10.5">600</text>
<text x="1150.9499999999998" y="984.5" text-anchor="middle" font-size="10.5">600</text>
<text x="1230.3" y="984.5" text-anchor="middle" font-size="10.5">600</text>
<text x="1335.6" y="984.5" text-anchor="middle" font-size="10.5">1000</text>
<text x="1440.85" y="984.5" text-anchor="middle" font-size="10.5">600</text>
<text x="1520.25" y="984.5" text-anchor="middle" font-size="10.5">600</text>
<line x1="988.7" y1="645.5" x2="988.7" y2="962" stroke="#8a7070" stroke-width="1.1"/>
<line x1="984.7" y1="645.5" x2="992.7" y2="645.5" stroke="#7a4a4a" stroke-width="1"/>
<line x1="984.7" y1="962" x2="992.7" y2="962" stroke="#7a4a4a" stroke-width="1"/>
<text x="999.5" y="802" transform="rotate(-90 999.5 802)" text-anchor="middle" font-size="10.5">2400</text>
<line x1="1007.6" y1="645.5" x2="1007.6" y2="962" stroke="#c87670" stroke-width="1.1"/>
<line x1="1003.6" y1="645.5" x2="1011.6" y2="645.5" stroke="#7a4a4a" stroke-width="1"/>
<line x1="1003.6" y1="684.5" x2="1011.6" y2="684.5" stroke="#7a4a4a" stroke-width="1"/>
<line x1="1003.6" y1="770" x2="1011.6" y2="770" stroke="#7a4a4a" stroke-width="1"/>
<line x1="1003.6" y1="949.6" x2="1011.6" y2="949.6" stroke="#7a4a4a" stroke-width="1"/>
<line x1="1003.6" y1="962" x2="1011.6" y2="962" stroke="#7a4a4a" stroke-width="1"/>
<path d="M1004.1 642.0 L1011.1 649.0 M1011.1 642.0 L1004.1 649.0" stroke="#c03030" stroke-width="1"/>
<path d="M1004.1 681.0 L1011.1 688.0 M1011.1 681.0 L1004.1 688.0" stroke="#c03030" stroke-width="1"/>
<path d="M1004.1 766.5 L1011.1 773.5 M1011.1 766.5 L1004.1 773.5" stroke="#c03030" stroke-width="1"/>
<path d="M1004.1 946.1 L1011.1 953.1 M1011.1 946.1 L1004.1 953.1" stroke="#c03030" stroke-width="1"/>
<text x="1019.5" y="646" transform="rotate(-90 1019.5 646)" text-anchor="middle" font-size="10.5">2400</text>
<text x="1019.5" y="682.5" transform="rotate(-90 1019.5 682.5)" text-anchor="middle" font-size="10.5">2115</text>
<text x="1019.5" y="767.5" transform="rotate(-90 1019.5 767.5)" text-anchor="middle" font-size="10.5">1465</text>
<text x="1019.5" y="948" transform="rotate(-90 1019.5 948)" text-anchor="middle" font-size="10.5">100</text>
<line x1="1580" y1="646" x2="1580" y2="962" stroke="#c87670" stroke-width="1.1"/>
<line x1="1576" y1="646" x2="1584" y2="646" stroke="#7a4a4a" stroke-width="1"/>
<line x1="1576" y1="683" x2="1584" y2="683" stroke="#7a4a4a" stroke-width="1"/>
<line x1="1576" y1="768" x2="1584" y2="768" stroke="#7a4a4a" stroke-width="1"/>
<line x1="1576" y1="854.7" x2="1584" y2="854.7" stroke="#7a4a4a" stroke-width="1"/>
<line x1="1576" y1="947.6" x2="1584" y2="947.6" stroke="#7a4a4a" stroke-width="1"/>
<line x1="1576" y1="962" x2="1584" y2="962" stroke="#7a4a4a" stroke-width="1"/>
<text x="1591" y="664" transform="rotate(-90 1591 664)" text-anchor="middle" font-size="10.5">285</text>
<text x="1591" y="725" transform="rotate(-90 1591 725)" text-anchor="middle" font-size="10.5">643</text>
<text x="1591" y="811" transform="rotate(-90 1591 811)" text-anchor="middle" font-size="10.5">648</text>
<text x="1591" y="901" transform="rotate(-90 1591 901)" text-anchor="middle" font-size="10.5">715</text>
<text x="1591" y="955" transform="rotate(-90 1591 955)" text-anchor="middle" font-size="10.5">100</text>
<text x="1574" y="768" transform="rotate(-90 1574 768)" text-anchor="middle" font-size="10.5">7</text>
<text x="1591" y="768.5" transform="rotate(-90 1591 768.5)" text-anchor="middle" font-size="10.5">2</text>
</svg><!--/ELEVSVG-->
<div class="a" style="left:1643px;top:105px;width:2px;height:896px;background:#8e8e8e"></div>
<div class="a" style="left:1645px;top:105px;width:3px;height:880px;background:#c6c6c6"></div>
<!-- SIDEBAR -->
<div class="a" style="left:1648px;top:106px;width:272px;height:902px;background:#fbfbfb"></div>
<div class="a" style="left:1650px;top:108px;width:266px;height:273px;background:#fff;border-bottom:1.5px solid #ededed"></div>
<div class="a" style="left:1650px;top:390px;width:266px;height:148px;background:#fff;border-top:1px solid #f0f0f0;border-bottom:1px solid #f0f0f0"></div>
<div class="a" style="left:1650px;top:592px;width:266px;height:205px;background:#fff;border-top:1px solid #f0f0f0;border-bottom:1.5px solid #ededed"></div>
<div class="a" style="left:1650px;top:805px;width:266px;height:196px;background:#fff;border-top:1px solid #f0f0f0"></div>
<div class="a lbl bold" style="left:1656px;top:111px">Cursor</div>
<div class="a inp" style="left:1660px;top:132px;width:247px;height:26px"></div>
<div class="a lbl" style="left:1677px;top:137px;color:#505050">900.0</div>
<svg class="a" style="left:1716px;top:134px" width="20" height="20"><path d="M9.5 1.5 L2 8 H7.5 V18 H11.5 V8 H17 Z" fill="#1a1760"/></svg>
<div class="a lbl" style="left:1737px;top:137px;color:#505050">On worktop</div>
<svg class="a" style="left:1886px;top:139px" width="20" height="12"><path d="M2 2.5 L9 9.5 L16 2.5" fill="none" stroke="#444" stroke-width="1.5"/></svg>
<div class="a lbl" style="left:1660px;top:173px">Height:</div>
<div class="a" style="left:1730px;top:168px;width:105px;height:25px;background:#ebebeb;border:1px solid #d6d6d6"></div>
<div class="a lbl" style="left:1735px;top:174px;color:#9a9a9a">900.0</div>
<div class="a lbl" style="left:1663px;top:202px">Angle:</div>
<div class="a inp" style="left:1730px;top:196px;width:105px;height:25px"></div>
<div class="a lbl" style="left:1735px;top:201px;color:#555">0.0</div>
<div class="a" style="left:1670px;top:226px;width:231px;height:143px;border:1px solid #f0f0f0"></div>
<div class="a lbl bold" style="left:1673px;top:229px">Distance:</div>
<div class="a lbl" style="left:1677px;top:247px">Type:</div>
<div class="a lbl" style="left:1801px;top:247px">Free</div>
<div class="a lbl" style="left:1677px;top:276px">Wall:</div>
<div class="a inp" style="left:1800px;top:271px;width:95px;height:25px"></div>
<div class="a lbl" style="left:1805px;top:276px;color:#555">822.8</div>
<div class="a lbl" style="left:1674px;top:305px">Next object:</div>
<div class="a inp" style="left:1800px;top:298px;width:95px;height:25px"></div>
<div class="a lbl" style="left:1805px;top:303px;color:#555">822.8</div>
<div class="a btn" style="left:1730px;top:332px;width:119px;height:29px;line-height:29px;background:#bdbdbd">Offset</div>
<div class="a lbl bold" style="left:1656px;top:393px">Object</div>
<div class="a inp" style="left:1660px;top:411px;width:247px;height:26px"></div>
<div class="a lbl bold" style="left:1667px;top:416px;color:#444">WINNER MACRO</div>
<svg class="a" style="left:1886px;top:418px" width="20" height="12"><path d="M2 2.5 L9 9.5 L16 2.5" fill="none" stroke="#444" stroke-width="1.5"/></svg>
<div class="a lbl" style="left:1660px;top:480px">Placement:</div>
<svg class="a" style="left:1740px;top:474px" width="100" height="20"><circle cx="10" cy="10" r="6" fill="#fdf3e0" stroke="#e9c98a" stroke-width="1"/><circle cx="10" cy="10" r="3.5" fill="#e0a040"/><circle cx="86" cy="10" r="6" fill="#fff" stroke="#555" stroke-width="1.2"/></svg>
<div class="a lbl" style="left:1760px;top:476px">Right</div>
<div class="a lbl" style="left:1835px;top:476px">Left</div>
<div class="a lbl" style="left:1660px;top:510px">Code:</div>
<div class="a" style="left:1733px;top:503px;width:175px;height:25px;background:#fff;border:1.5px solid #8aa4cc"></div>
<div class="a btn" style="left:1652px;top:549px;width:129px;height:30px;line-height:30px;background:#c2c2c2;color:#666">Corner</div>
<div class="a btn" style="left:1786px;top:549px;width:131px;height:30px;line-height:30px;background:#c2c2c2;color:#555;font-size:13.5px">Standard products</div>
<div class="a lbl bold" style="left:1656px;top:596px">Objects</div>
<div class="a" style="left:1660px;top:615px;width:246px;height:173px;background:#fff;border:1px solid #f4f4f4"></div>
<div class="a lbl bold" style="left:1666px;top:618px">Code</div>
<div class="a lbl bold" style="left:1736px;top:618px">Posit...</div>
<div class="a lbl bold" style="left:1786px;top:618px">Description</div>
<div class="a" style="left:1662px;top:768px;width:246px;height:20px;background:#efefef"></div>
<div class="a" style="left:1685px;top:769px;width:79px;height:18px;background:#c8c8c8"></div>
<svg class="a" style="left:1664px;top:770px" width="244" height="16"><path d="M12 3 L7 8 L12 13" fill="none" stroke="#444" stroke-width="1.6"/><path d="M230 3 L235 8 L230 13" fill="none" stroke="#444" stroke-width="1.6"/></svg>
<div class="a lbl bold" style="left:1656px;top:808px">Selected Objects</div>
<div class="a" style="left:1662px;top:826px;width:246px;height:176px;background:#fff;border:1px solid #9a9a9a"></div>
<div class="a" style="left:1645px;top:1005px;width:275px;height:3px;background:#e0e0e0"></div>

<svg class="a" style="left:0;top:62px" width="1920" height="43" viewBox="0 62 1920 43">
<g fill="none" stroke="#3b3b3b" stroke-width="2" stroke-linecap="butt">
<!-- separators -->
<g stroke="#e6dcc2" stroke-width="1.2">
<line x1="39.5" y1="68" x2="39.5" y2="100"/><line x1="194.5" y1="68" x2="194.5" y2="100"/>
<line x1="273" y1="68" x2="273" y2="100"/><line x1="319" y1="68" x2="319" y2="100"/>
<line x1="398" y1="68" x2="398" y2="100"/><line x1="510" y1="68" x2="510" y2="100"/>
<line x1="689" y1="68" x2="689" y2="100"/><line x1="834" y1="68" x2="834" y2="100"/>
<line x1="880" y1="68" x2="880" y2="100"/><line x1="926" y1="68" x2="926" y2="100"/>
<line x1="1171" y1="68" x2="1171" y2="100"/>
</g>
<!-- highlights -->
<g stroke="none" fill="#f2dfa9">
<rect x="88" y="67" width="31" height="33"/><rect x="650" y="67" width="32" height="33"/><rect x="933" y="67" width="33" height="33"/>
</g>
<!-- back arrow -->
<path d="M18 72.5 L7 83.4 L18 94 M7 83.4 H28" stroke-width="1.8" stroke="#444"/>
<!-- icon A -->
<path d="M59.5 71 H83 V96 H59.5 M59.5 71 V76 M59.5 80 V86 M59.5 90 V96" stroke-width="2.2"/>
<path d="M83 85 A8 8 0 0 1 75 77 H83" stroke-width="1.8"/>
<!-- icon B highlighted -->
<rect x="92" y="71" width="24" height="25" fill="#ecd99a" stroke="#3a3010" stroke-width="2.4"/>
<rect x="96.5" y="74" width="6" height="19" stroke="#3a3010" stroke-width="1.6"/>
<g stroke="#3a3010" stroke-width="1.2"><rect x="98" y="76" width="3" height="3"/><rect x="98" y="81" width="3" height="3"/><rect x="98" y="87" width="3" height="3"/></g>
<!-- icon C -->
<path d="M126 71 V96 H150 M138 71 V84 H150 M127 95 L137 84" stroke-width="2.2"/>
<path d="M130 73 V82 M134 73 V82 M128 86 H136" stroke-width="1" stroke-dasharray="1.5 2"/>
<!-- icon D -->
<path d="M158.5 71 H167 V86 H183 V96 H158.5 Z M159 95 L167 86 M170 86 V96 M176 86 V96" stroke-width="2.2"/>
<path d="M162.5 74 V83" stroke-width="1" stroke-dasharray="1.5 2.5"/>
<!-- save -->
<path d="M205 72 H224 L229 77 V95 H205 Z M209 72 V80 H222 V72 M209 95 V85.5 H225 V95" stroke-width="2.1"/>
<!-- print -->
<path d="M242.5 77 V71.5 H258 V77 M238 91 V77 H262 V91 H258 M242 91 H238 M242.5 95 V84.5 H258 V95 Z M246 91 H254" stroke-width="2.1"/>
<!-- S box -->
<rect x="284" y="71.5" width="24" height="24" stroke-width="2.1"/>
<text x="296" y="89" font-family="Liberation Sans" font-size="13" text-anchor="middle" fill="#3b3b3b" stroke="none">S</text>
<!-- undo -->
<path d="M336.5 77.5 A9 9 0 1 1 351 88 L339 95.5 M332.5 74 V81.5 H339.5" stroke-width="1.9"/>
<!-- redo faded -->
<path d="M381.5 77.5 A9 9 0 1 0 367 88 L379 95.5 M385.5 74 V81.5 H378.5" stroke-width="1.9" stroke="#d8d8d8"/>
<!-- scissors faded -->
<g stroke="#d6d6d6" stroke-width="2"><circle cx="413" cy="76" r="3.5"/><circle cx="413" cy="90" r="3.5"/><path d="M416 78 L433 91 M416 88 L433 74"/></g>
<!-- copy faded -->
<path d="M442.5 76 H451 L455 80 V95 H442.5 Z M451 71.5 H461 L466 76 V90 H455" stroke="#d6d6d6" stroke-width="2"/>
<!-- paste -->
<path d="M486 73 H478 V93 H485 M485 73 V70.5 H490 V73 M490 73 H495 V78" stroke-width="2"/>
<rect x="485.5" y="78" width="14" height="17.5" stroke-width="2.1"/>
<path d="M489 83 H496 M489 87 H493 M489 91 H496" stroke-width="1.3"/>
<!-- zoom faded -->
<g stroke="#d6d6d6" stroke-width="2">
<circle cx="535.5" cy="81" r="9.5"/><path d="M528.5 88 L523 95 M535.5 76 V86 M530.5 81 H540.5"/>
<circle cx="568" cy="81" r="9.5"/><path d="M561 88 L555.5 95 M563 81 H573"/>
<circle cx="601" cy="81" r="9.5"/><path d="M594 88 L588.5 95 M598 77 H604 V85 H598 Z"/>
</g>
<!-- zoom dark -->
<circle cx="635" cy="81" r="9.5" stroke-width="2"/><path d="M627.5 88 L621.5 95.5 M624.5 86 L620 92" stroke-width="1.6"/>
<g fill="#3b3b3b" stroke="none"><circle cx="635.5" cy="77.5" r="1.3"/><circle cx="632" cy="81" r="1.2"/><circle cx="632" cy="84" r="1.2"/><circle cx="637.5" cy="84" r="1.4"/></g>
<circle cx="668.5" cy="81" r="9.5" stroke="#3a3010" stroke-width="2"/><path d="M661 88 L655 95.5 M658 86 L653.5 92" stroke="#3a3010" stroke-width="1.6"/>
<path d="M664 77 H672 V85 H664" stroke="#3a3010" stroke-width="1.6"/>
<!-- faded text tools -->
<g stroke="#d6d6d6" stroke-width="2">
<path d="M702 73 H722 V86 L715 93 H702 Z M706 78 H718 M706 82 H716 M706 86 H712"/>
<path d="M733 74 H757 V89 H739 L734 94 Z M738 80 H752"/>
<path d="M766 72 H790 V78 M766 72 V78 M778 72 V95 M772 95 H784"/>
</g>
<!-- swatch -->
<path d="M799.5 72 H806 V95.5 H799.5 Z M806 86 H823 V95.5 H806 M812 86 V95.5 M817.5 86 V95.5 M806 82 L815 73 L821.5 79.5 L813 88" stroke-width="2.1"/>
<!-- refresh faded -->
<path d="M866 74.5 A11 11 0 1 0 867 86" stroke="#d6d6d6" stroke-width="2" stroke-dasharray="3 1"/><path d="M862 75 H867 V70" stroke="#d6d6d6" stroke-width="2"/>
<!-- calculator -->
<rect x="894" y="71.5" width="20" height="24" rx="2" stroke-width="2.1"/>
<rect x="897.5" y="75" width="13" height="4.5" stroke-width="1.6"/>
<g stroke-width="1.3" stroke-dasharray="1.5 2.5"><path d="M898 83.5 H910 M898 87.5 H910 M898 91 H910"/></g>
<!-- cursor -->
<path d="M944.5 73.5 L945 92 L949.5 86 L953 92.5 L955 91.5 L952 85 L958 84.5 Z" stroke="#3a3010" stroke-width="1.9" stroke-linejoin="miter"/>
<!-- wall icons -->
<g stroke-width="1.9" stroke-linejoin="miter">
<path d="M970.7 79.1 L978.8 86.4 L971 91.6 M978.8 86.4 V95.3"/>
<path d="M986.9 71.8 C983 73 982 77 982.2 81.7 L990.5 89.5 M984.8 75 L990.5 80.7 L993.4 79.2 M990.5 80.7 V89.5 M988.5 89.5 H993.8"/>
<path d="M1004 79.1 L1026.5 94.7 M1004 91.6 L1011.9 86.9 M1011.9 87 V95.3"/>
<path d="M1016 72.9 L1018.6 71.8 M1016.5 73 L1023.9 80.7 L1027 79.1 M1023.9 80.7 V93.2 M1021.5 93.2 H1027"/>
<path d="M1037.9 78.6 L1045.2 83.8 L1037.9 87.4 M1045.2 83.8 V95.3 M1039.5 91 V95.3"/>
<path d="M1050.9 71.8 L1053 72.3 M1051 72.5 L1056.7 78 L1060.3 76.5 M1056.1 78 V92.1 M1051.5 87.4 L1056.7 92.1 L1060.3 90.6"/>
<path d="M1104.4 90 L1113.5 73 L1126.8 76.9 M1114.7 73.5 V95.2 L1126.8 89.5 V77 M1117.5 87 L1121 82.5"/>
<path d="M1138.2 71.7 V95.2 M1144.5 71.7 V95.2 M1154.3 72 V77 M1154.3 80 V86 M1154.3 89 V95.2 M1160.6 76.9 L1152 83.2 L1160.6 89.5 Z"/>
</g>
<g fill="#3b3b3b" stroke="none">
<circle cx="1027.5" cy="84.3" r="1.1"/><circle cx="1060.3" cy="85.9" r="1.1"/><circle cx="1027.7" cy="84.3" r="0.1"/>
</g>
<g stroke="#555" stroke-width="1" stroke-dasharray="1 1.6">
<path d="M983 80 V95.3 M974.9 76.5 L982 80.5 M977 83 L985 88 M1007.5 76 L1019 83.5 M1009 82 L1017 87 M1041 75 L1050 80 M1043 80.5 L1049 84"/>
</g>
<path d="M1075.2 72 V95 M1082 72 V95 M1075 76.9 H1082 M1075 84.9 H1082 M1075 91.8 H1082 M1090 72 V95" stroke="#d9d9d9" stroke-width="1.8"/>
<!-- tape -->
<path d="M1183 79 A12 8 0 0 1 1207 79 V87 A12 6 0 0 1 1183 87 Z M1183 79 A12 6 0 0 0 1207 79 M1189 89 V93 M1195 90 V94 M1201 89 V93" stroke-width="2"/>
<path d="M1191 78 A4 2.5 0 1 0 1199 78 A6 3.5 0 0 0 1187 78" stroke-width="1.6"/>
<!-- right icons -->
<path d="M1819 83 L1843 73 V95 L1819 86 Z M1825 88 L1827 94 L1832 92" stroke-width="2"/>
<path d="M1855 86 A7 7 0 0 1 1859 75 A9 9 0 0 1 1876 78 A6 6 0 0 1 1876 89 H1872 M1858 83 H1871 V91 H1862 L1858 95 Z" stroke-width="1.9"/>
<rect x="1886" y="74" width="25" height="20" stroke-width="2.1"/><path d="M1886 74 L1898.5 85 L1911 74" stroke-width="1.9"/>
</g>
</svg>

</body></html>
